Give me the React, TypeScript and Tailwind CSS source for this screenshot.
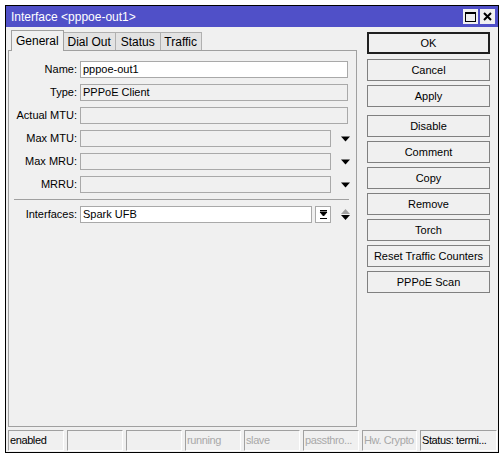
import React from 'react'

const font = { fontFamily: '"Liberation Sans", Arial, sans-serif' }

function DownArrow() {
  return (
    <svg width="9" height="6" viewBox="0 0 9 6" className="shrink-0">
      <path d="M0 0.5 H9 L4.5 5.5 Z" fill="#000" />
    </svg>
  )
}

function Field({ label, value, white, arrow, width }: { label: string; value?: string; white?: boolean; arrow?: boolean; width?: string }) {
  return (
    <div className="flex items-center h-[17px]">
      <div className="w-[71px] text-right pr-[3px] leading-none">{label}</div>
      <div
        className={`h-[17px] ${width ?? 'w-[268px]'} border border-[#a9a9a9] px-[2px] flex items-center leading-none ${white ? 'bg-white' : 'bg-[#f0f0f0]'}`}
      >
        {value}
      </div>
      {arrow && (
        <div className="w-[24px] flex justify-center pl-[4px]">
          <DownArrow />
        </div>
      )}
    </div>
  )
}

const buttons = ['Disable', 'Comment', 'Copy', 'Remove', 'Torch', 'Reset Traffic Counters', 'PPPoE Scan']

const statusCells = [
  { t: 'enabled', w: 'w-[56px]', on: true },
  { t: '', w: 'w-[56px]' },
  { t: '', w: 'w-[56px]' },
  { t: 'running', w: 'w-[56px]' },
  { t: 'slave', w: 'w-[56px]' },
  { t: 'passthro...', w: 'w-[56px]' },
  { t: 'Hw. Crypto', w: 'w-[55px]' },
  { t: 'Status: termi...', w: 'w-[77px]', on: true },
]

export default function App() {
  return (
    <div className="w-[503px] h-[458px] bg-white text-[11px] text-black overflow-hidden pl-[5px] pt-[5px]" style={font}>
      <div className="w-[494px] h-[448px] border border-black flex flex-col bg-[#f0f0f0]">
        {/* Title bar */}
        <div className="h-[21px] bg-[#5050c8] flex items-center justify-between pl-[5px] pr-[3px] shrink-0">
          <span className="text-white text-[12px] leading-none">Interface &lt;pppoe-out1&gt;</span>
          <div className="flex gap-[2px]">
            <div className="w-[15px] h-[15px] bg-[#f0f0f0] flex items-center justify-center">
              <div className="w-[11px] h-[10px] border border-black border-t-2" />
            </div>
            <div className="w-[15px] h-[15px] bg-[#f0f0f0] flex items-center justify-center">
              <svg width="9" height="9" viewBox="0 0 9 9">
                <path d="M1 1 L8 8 M8 1 L1 8" stroke="#000" strokeWidth="2" />
              </svg>
            </div>
          </div>
        </div>

        {/* Body */}
        <div className="flex flex-1 min-h-0">
          <div className="pl-[2px] pt-[3px] flex flex-col w-[352px]">
            {/* Tabs */}
            <div className="flex items-end h-[20px] pl-[3px]">
              <div className="h-[21px] px-[4px] border border-b-0 border-[#a0a0a0] bg-[#f0f0f0] flex items-center relative top-[1px] z-10 text-[12px]">
                General
              </div>
              <div className="h-[18px] w-[52px] border border-l-0 border-b-0 border-[#b0b0b0] bg-[#e3e3e3] flex items-center justify-center text-[12px]">
                Dial Out
              </div>
              <div className="h-[18px] w-[45px] border border-l-0 border-b-0 border-[#b0b0b0] bg-[#e3e3e3] flex items-center justify-center text-[12px]">
                Status
              </div>
              <div className="h-[18px] w-[41px] border border-l-0 border-b-0 border-[#b0b0b0] bg-[#e3e3e3] flex items-center justify-center text-[12px]">
                Traffic
              </div>
            </div>
            {/* Panel */}
            <div className="w-[349px] h-[377px] border border-[#a0a0a0] pt-[10px] flex flex-col gap-[6px]">
              <Field label="Name:" value="pppoe-out1" white />
              <Field label="Type:" value="PPPoE Client" />
              <Field label="Actual MTU:" />
              <Field label="Max MTU:" width="w-[251px]" arrow />
              <Field label="Max MRU:" width="w-[251px]" arrow />
              <Field label="MRRU:" width="w-[251px]" arrow />
              <div className="ml-[5px] w-[335px] h-px bg-[#a0a0a0]" />
              <div className="flex items-center h-[17px]">
                <div className="w-[71px] text-right pr-[3px] leading-none">Interfaces:</div>
                <div className="h-[17px] w-[232px] border border-[#a9a9a9] bg-white px-[2px] flex items-center leading-none">
                  Spark UFB
                </div>
                <div className="ml-[3px] h-[17px] w-[16px] border border-[#a9a9a9] bg-white flex items-center justify-center">
                  <svg width="9" height="9" viewBox="0 0 9 9">
                    <path d="M1 0.5 H8 M1 2 H8 L4.5 6 Z M1 8.5 H8" stroke="#000" strokeWidth="1" fill="#000" />
                  </svg>
                </div>
                <div className="w-[24px] flex flex-col items-center pl-[4px] gap-[1px]">
                  <svg width="9" height="5" viewBox="0 0 9 5">
                    <path d="M0 5 H9 L4.5 0 Z" fill="#a0a0a0" />
                  </svg>
                  <svg width="9" height="5" viewBox="0 0 9 5">
                    <path d="M0 0 H9 L4.5 5 Z" fill="#000" />
                  </svg>
                </div>
              </div>
            </div>
          </div>

          {/* Right buttons */}
          <div className="ml-[9px] pt-[5px] flex flex-col w-[123px]">
            <div className="h-[22px] border-2 border-[#202020] bg-[#f0f0f0] flex items-center justify-center">OK</div>
            <div className="mt-[5px] h-[22px] border border-[#808080] flex items-center justify-center">Cancel</div>
            <div className="mt-[4px] h-[22px] border border-[#808080] flex items-center justify-center">Apply</div>
            <div className="mt-[8px] flex flex-col gap-[4px]">
              {buttons.map(b => (
                <div key={b} className="h-[22px] border border-[#808080] flex items-center justify-center">
                  {b}
                </div>
              ))}
            </div>
          </div>
        </div>

        {/* Status bar */}
        <div className="h-[22px] flex gap-[3px] pl-[2px] pb-[1px] shrink-0">
          {statusCells.map((c, i) => (
            <div
              key={i}
              className={`${c.w} h-[21px] border border-t-[#a0a0a0] border-l-[#a0a0a0] border-r-white border-b-white flex items-center px-[1px] overflow-hidden whitespace-nowrap tracking-[-0.4px] ${c.on ? 'text-black' : 'text-[#a8a8a8]'}`}
            >
              {c.t}
            </div>
          ))}
        </div>
      </div>
    </div>
  )
}
